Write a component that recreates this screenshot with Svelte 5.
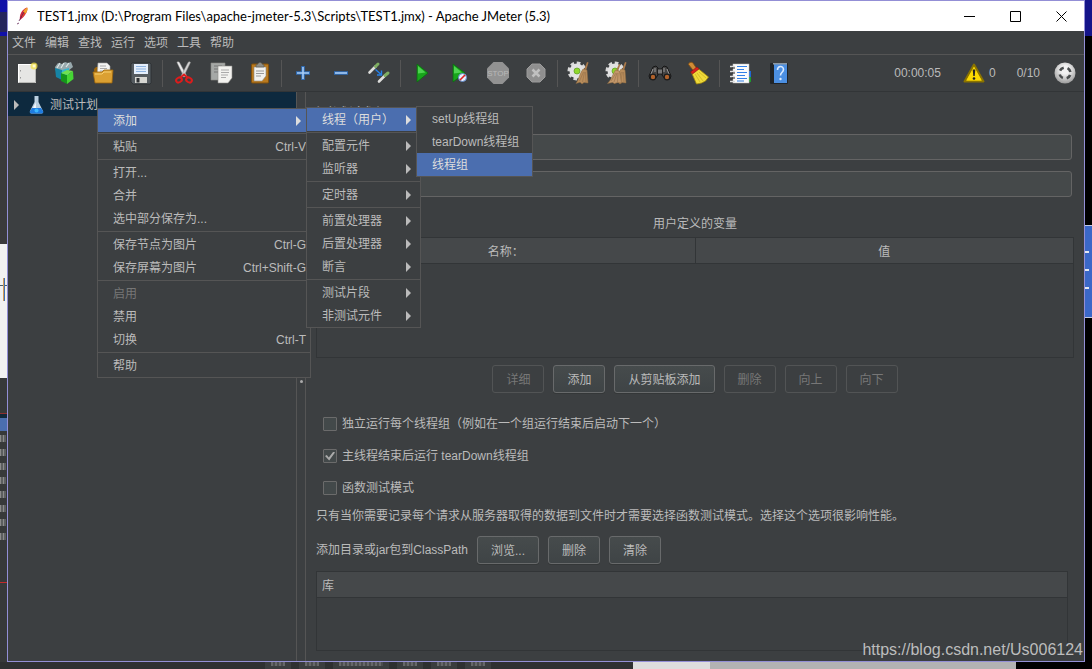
<script>
  const menus = ['文件', '编辑', '查找', '运行', '选项', '工具', '帮助']

  // toolbar art is drawn on a 24x24 grid
  const page = (x, y, w, h, fill) => `<path d="M${x} ${y}h${w}v${h - 5}l-4 5h-${w - 4}z" fill="${fill}" stroke="#8b8b86" stroke-width=".6"/>`
  const gear = `<circle cx="10" cy="10" r="8" fill="none" stroke="#d9d9d9" stroke-width="3" stroke-dasharray="3.600 2.600"/><circle cx="10" cy="10" r="7.500" fill="#e2e2e2"/><circle cx="10" cy="10" r="3" fill="#8fd82c" stroke="#5c9a1e" stroke-width=".7"/>`
  const besom = `<path d="M20 1l1.500.6-2.500 8-2-.6z" fill="#a9794a"/><path d="M16 8l4 1 1 13-4-.5-2 1.500-2-1.800-4 1.300c3-4 3-9 7-14.500z" fill="#b98d5b" stroke="#8d6a41" stroke-width=".5"/><path d="M16.500 11l-4 9M17.500 11l-2 10M18.500 11l.5 10" stroke="#96704a" stroke-width=".6"/>`
  const besomLeft = `<path d="M14 3l1.500.6-3 8-2-.8z" fill="#a9794a"/><path d="M10.500 9l4 1 2 12-4-.5-3 1-2-1-5 1c4-4 4.500-8 8-13.500z" fill="#c1966a" stroke="#8d6a41" stroke-width=".5"/><path d="M11 12l-5 8M12 12l-3 9M13 12l-.5 9" stroke="#96704a" stroke-width=".6"/>`

  const tools = [
    [
      { label: '新建', art: `<rect x="3.500" y="3.500" width="17" height="18" fill="#e6e6e4" stroke="#fff"/><path d="M3.500 21.500h17V8" fill="none" stroke="#b9b9b6"/><path d="M5.500 9v1.500M5.500 16v1.500" stroke="#999"/><circle cx="19" cy="5" r="3.500" fill="#f3e24a" opacity=".75"/><circle cx="19" cy="5" r="1.500" fill="#fffbd0"/>` },
      { label: '模板', art: `<path d="M2 6l3-4 4 1 3-2 3 1 3-1 2 5-5 4-12 0z" fill="#98a9ad"/><path d="M4 7l3-5M8 7l3-5M13 6l3-4" stroke="#dfe7e7" stroke-width="1.200"/><path d="M2 7l7 2v10l-6-3z" fill="#1684a5"/><path d="M9 9l7-2v6l-7 5z" fill="#35b5cf"/><path d="M8 12l6 2v9l-6-3z" fill="#16951c"/><path d="M14 14l6-4 .5 8-6.500 5z" fill="#45d634"/><path d="M8 12l6-3 6 1-6 4z" fill="#6fe050"/>` },
      { label: '打开', art: `<path d="M3 8l2-2h3v14H4z" fill="#9c650b"/><path d="M7 2h9l3 3v12H6z" fill="#f4f4f2" stroke="#a8a8a8" stroke-width=".6"/><path d="M9 5h6M9 7.500h7M9 10h7" stroke="#aaa"/><path d="M2 11h9l2-2h9l-1 13H4z" fill="#dba032" stroke="#9c650b" stroke-width=".8"/><path d="M4 13h7l2-2h7" stroke="#f6cf71" fill="none"/>` },
      { label: '保存', art: `<path d="M3 2h18l1 1v19l-1 1H4l-2-2V3z" fill="#555b60" stroke="#2a2d30" stroke-width=".8"/><rect x="5" y="3" width="14" height="10" fill="#e4eefb"/><path d="M7 5.500h10M7 8h10M7 10.500h10" stroke="#8db3e0"/><rect x="6" y="16" width="12" height="6" fill="#d6d6d2"/><rect x="7.500" y="17" width="3" height="4.500" fill="#2d3033"/>` }
    ],
    [
      { label: '剪切', art: `<path d="M5 1.500c0-1 2-1 2.500 0l7 13-2.500 1.500z" fill="#e9e9e9" stroke="#999" stroke-width=".5"/><path d="M18.500 1.500c0-1-2-1-2.500 0L9 15l2.500 1z" fill="#d0d0d0" stroke="#888" stroke-width=".5"/><ellipse cx="7" cy="19" rx="3" ry="2.300" fill="none" stroke="#dd1c1c" stroke-width="2" transform="rotate(-30 7 19)"/><ellipse cx="17" cy="19" rx="3" ry="2.300" fill="none" stroke="#dd1c1c" stroke-width="2" transform="rotate(30 17 19)"/><path d="M8.500 16.500l3.500-3 3.500 3" fill="none" stroke="#dd1c1c" stroke-width="2"/>` },
      { label: '复制', art: `${page(1, 2, 14, 17, '#a5a8a6')}<path d="M4 5h8M4 8h7M4 11h4" stroke="#777"/>${page(8, 5, 14, 17, '#f2f2ef')}<path d="M11 9h8M11 11.500h8M11 14h7M11 16.500h5" stroke="#aaa"/>` },
      { label: '粘贴', art: `<rect x="3.500" y="3" width="17" height="19" rx="1" fill="#b8791f" stroke="#80500c"/>${page(6, 6, 12, 14, '#f1f1ee')}<path d="M8 10h8M8 12.500h8M8 15h5" stroke="#999"/><path d="M8 6V4l2-1c0-2 4-2 4 0l2 1v2z" fill="#8c8c86" stroke="#55554f" stroke-width=".6"/>` }
    ],
    [
      { label: '展开', art: `<path d="M12 5v14M5 12h14" stroke="#2f6cb5" stroke-width="3.600"/><path d="M12 6v12M6 12h12" stroke="#a8ccf5" stroke-width="1.600"/>` },
      { label: '收起', art: `<path d="M5 12h14" stroke="#2f6cb5" stroke-width="3.600"/><path d="M6 12h12" stroke="#a8ccf5" stroke-width="1.600"/>` },
      { label: '切换', art: `<path d="M2.500 11.500l6-6" stroke="#dededc" stroke-width="2.600" stroke-linecap="round"/><path d="M8.500 5.500l2.500-2.500" stroke="#7fae62" stroke-width="3" stroke-linecap="round"/><path d="M12 20.500l6-6" stroke="#dededc" stroke-width="2.600" stroke-linecap="round"/><path d="M18 14.500l3-2.500" stroke="#7fae62" stroke-width="3" stroke-linecap="round"/><path d="M8.500 8.500l5 4.500M14.500 9.500v4.500h-4.500" fill="none" stroke="#2681e8" stroke-width="1.400"/>` }
    ],
    [
      { label: '启动', art: `<path d="M7 3l11 9L7 21z" fill="#18a51b" stroke="#0a6d10" stroke-width=".8"/><path d="M8 5l7.500 6.500-7.500 1z" fill="#4ed350"/>` },
      { label: '不停顿开始', art: `<path d="M5 3l12 9-12 9z" fill="#18a51b" stroke="#0a6d10" stroke-width=".8"/><path d="M6 5l8 6.500-8 1z" fill="#4ed350"/><circle cx="14.500" cy="16.500" r="4" fill="#e8eefc" stroke="#5c86c8" stroke-width="1"/><path d="M12 19l5-5" stroke="#e02020" stroke-width="1.600"/>` },
      { label: '停止', art: `<path d="M7.500 1h9L23 7.500v9L16.500 23h-9L1 16.500v-9z" fill="#929292"/><text x="12" y="15" text-anchor="middle" font-family="Liberation Sans, sans-serif" font-size="8" fill="#b9b9b9">STOP</text>` },
      { label: '关闭', art: `<path d="M8 3h8l5 5v8l-5 5H8l-5-5V8z" fill="#8f8f8f" stroke="#9b9b9b"/><path d="M8.500 8.500l7 7M15.500 8.500l-7 7" stroke="#c0c0c0" stroke-width="2.500"/>` }
    ],
    [
      { label: '清除', art: gear + besom },
      { label: '清除全部', art: gear + besom + besomLeft }
    ],
    [
      { label: '查找', art: `<path d="M5 6l3-1 2 2v7l-3 4H2l-1-3z" fill="#454545" stroke="#161616"/><path d="M19 6l-3-1-2 2v7l3 4h5l1-3z" fill="#454545" stroke="#161616"/><rect x="9.500" y="8" width="5" height="5" fill="#777" stroke="#161616" stroke-width=".8"/><path d="M5 8l-2 5M19 8l2 5M7 7v4M16 7v4" stroke="#999"/><circle cx="5" cy="16" r="2.800" fill="#b1622b" stroke="#1c1c1c" stroke-width="1.200"/><circle cx="19" cy="16" r="2.800" fill="#b1622b" stroke="#1c1c1c" stroke-width="1.200"/>` },
      { label: '重置查找', art: `<path d="M2.500 3.500c0-2 3-3 4.500-1.500l4 6-3 2.500z" fill="#cf8c35" stroke="#7d4d12" stroke-width=".8"/><path d="M5.500 11.500l6-4.500 11 9-3 4-4 2-5 1z" fill="#f0da3a" stroke="#a48b0a" stroke-width=".8"/><path d="M9 13l5 8M11 12l6 8M13 11l7 6" stroke="#cdb722" stroke-width=".8"/><path d="M4.500 11l6.500-5 2 2-6.500 5z" fill="#d8201e" stroke="#8a1010" stroke-width=".6"/>` }
    ],
    [
      { label: '函数助手对话框', art: `<rect x="19" y="10" width="3" height="6" fill="#2068d4"/><rect x="19" y="16" width="3" height="5" fill="#1d9c2c"/><rect x="4" y="3" width="16" height="19" fill="#fbfbfb" stroke="#bbb" stroke-width=".5"/><path d="M8 5.500h10M8 8.500h7M8 11.500h10M8 14.500h8M8 17.500h10M8 20h7" stroke="#3280e8" stroke-width="1.200"/><path d="M1 5.500h5M1 10.500h5M1 15.500h5M1 20.500h5" stroke="#ddd" stroke-width="1.600"/><path d="M3 7h3M3 12h3M3 17h3" stroke="#222"/>` },
      { label: '帮助', art: `<rect x="3" y="2" width="18" height="21" rx="1" fill="#202428"/><path d="M7 3h13v19H7z" fill="#4b8fe2"/><path d="M6 2h14v1.500H6z" fill="#8d99a5"/><path d="M10.500 9c0-4.500 6-4.500 6-.5 0 3-3 2.500-3 6" fill="none" stroke="#dcebff" stroke-width="1.600"/><circle cx="13.500" cy="18" r="1.200" fill="#dcebff"/>` }
    ]
  ]

  const threadMenu = [
    { label: 'setUp线程组' },
    { label: 'tearDown线程组' },
    { label: '线程组', active: true }
  ]

  const addMenu = [
    { label: '线程（用户）', active: true, more: true, items: threadMenu },
    null,
    { label: '配置元件', more: true },
    { label: '监听器', more: true },
    null,
    { label: '定时器', more: true },
    null,
    { label: '前置处理器', more: true },
    { label: '后置处理器', more: true },
    { label: '断言', more: true },
    null,
    { label: '测试片段', more: true },
    { label: '非测试元件', more: true }
  ]

  const contextMenu = [
    { label: '添加', active: true, more: true, items: addMenu },
    null,
    { label: '粘贴', keys: 'Ctrl-V' },
    null,
    { label: '打开...' },
    { label: '合并' },
    { label: '选中部分保存为...' },
    null,
    { label: '保存节点为图片', keys: 'Ctrl-G' },
    { label: '保存屏幕为图片', keys: 'Ctrl+Shift-G' },
    null,
    { label: '启用', disabled: true },
    { label: '禁用' },
    { label: '切换', keys: 'Ctrl-T' },
    null,
    { label: '帮助' }
  ]

  const rowActions = [
    { label: '详细', disabled: true },
    { label: '添加' },
    { label: '从剪贴板添加' },
    { label: '删除', disabled: true },
    { label: '向上', disabled: true },
    { label: '向下', disabled: true }
  ]

  let name = $state('')
  let comment = $state('')
  let options = $state([
    { label: '独立运行每个线程组（例如在一个组运行结束后启动下一个）', checked: false },
    { label: '主线程结束后运行 tearDown线程组', checked: true },
    { label: '函数测试模式', checked: false }
  ])
</script>

{#snippet menuList(items, level)}
  <ul class="menu level-{level}" role="menu">
    {#each items as item}
      {#if item}
        <li role="none">
          <button class="menu-item" class:active={item.active} role="menuitem" disabled={item.disabled}>
            <span>{item.label}</span>
            {#if item.keys}<span class="keys">{item.keys}</span>{/if}
            {#if item.more}<span class="arrow"></span>{/if}
          </button>
          {#if item.items}
            {@render menuList(item.items, level + 1)}
          {/if}
        </li>
      {:else}
        <li class="menu-line" role="separator"></li>
      {/if}
    {/each}
  </ul>
{/snippet}

<div class="desktop">
  <div class="edge edge-left" aria-hidden="true">
    <div class="sky"></div>
    <div class="dark-pane"></div>
    <div class="white-pane"><i></i></div>
    <div class="low-pane"></div>
    <div class="blue-line"></div>
    <div class="mid-pane">
      {#each Array(8) as _}
        <i></i>
      {/each}
    </div>
    <div class="red-line"></div>
  </div>

  <div class="window">
    <header class="titlebar">
      <svg class="feather" width="14" height="18" viewBox="0 0 14 18">
        <path d="M4 13C3 8 6 2 11 .500c1.500 3-2 9-7 12.500z" fill="#cf2342" />
        <path d="M7 5c1-2 2.500-4 4.500-4.500.5 2-.500 4-2 6.500z" fill="#f2a32c" />
        <path d="M5 9l2.500-4 2 1.500-3 4z" fill="#e2432c" />
        <path d="M1 17l2-1M3 14l5-9" stroke="#5f2153" stroke-width=".8" />
      </svg>
      <span class="title">TEST1.jmx (D:\Program Files\apache-jmeter-5.3\Scripts\TEST1.jmx) - Apache JMeter (5.3)</span>
      <button class="win-btn" aria-label="最小化"><svg width="11" height="11"><path d="M0 5.500h11" /></svg></button>
      <button class="win-btn" aria-label="最大化"><svg width="11" height="11"><path d="M.5.5h10v10H.5z" /></svg></button>
      <button class="win-btn" aria-label="关闭"><svg width="11" height="11"><path d="M.5.5l10 10M10.500.5l-10 10" /></svg></button>
    </header>

    <nav class="menubar">
      {#each menus as menu}
        <button>{menu}</button>
      {/each}
    </nav>

    <div class="toolbar">
      {#each tools as group, i}
        {#if i > 0}<span class="tool-line"></span>{/if}
        {#each group as tool}
          <button class="tool" aria-label={tool.label}>
            <svg width="24" height="24" viewBox="0 0 24 24">{@html tool.art}</svg>
          </button>
        {/each}
      {/each}
      <div class="status">
        <span class="clock">00:00:05</span>
        <svg width="22" height="20" viewBox="0 0 22 20">
          <path d="M11 1.500L20.500 18.500h-19z" fill="#f7d000" stroke="#8a7300" stroke-width="2" stroke-linejoin="round" />
          <path d="M11 4L18.500 17.500h-15z" fill="#fbd900" />
          <path d="M9.700 6.500h2.600l-.6 6.500h-1.400z" fill="#222" />
          <circle cx="11" cy="15.500" r="1.300" fill="#222" />
        </svg>
        <span class="errors">0</span>
        <span class="threads">0/10</span>
        <svg width="22" height="22" viewBox="0 0 22 22">
          <defs>
            <radialGradient id="knob" cx=".5" cy=".35" r=".65">
              <stop offset=".3" stop-color="#f2f2f2" />
              <stop offset="1" stop-color="#9c9c9c" />
            </radialGradient>
          </defs>
          <circle cx="11" cy="11" r="10.500" fill="url(#knob)" />
          <circle cx="11" cy="11" r="5.500" fill="none" stroke="#4a4d4e" stroke-width="2.600" stroke-dasharray="4.640 4" stroke-dashoffset="-2" />
        </svg>
      </div>
    </div>

    <main class="workspace">
      <aside class="tree">
        <button class="tree-row">
          <span class="arrow"></span>
          <svg width="15" height="19" viewBox="0 0 15 19">
            <path d="M5.500 1h4v6l4.500 9c.5 1.500 0 2.500-1.500 2.500h-10C1 18.500.5 17.500 1 16l4.500-9z" fill="#b9cfe0" />
            <path d="M3 13h9l2 3c.5 1.500 0 2.500-1.500 2.500h-10C1 18.500.5 17.500 1 16z" fill="#1f7ce0" />
            <path d="M6.500 1v7l-2.500 5h3z" fill="#f2f7fb" />
            <circle cx="7.500" cy="15.500" r="2" fill="#39b7ff" />
          </svg>
          <span>测试计划</span>
        </button>
      </aside>

      <div class="splitter"><span class="grip"></span></div>

      <section class="panel">
        <h1>测试计划</h1>
        <div class="fields">
          <input type="text" aria-label="名称" bind:value={name} />
          <input type="text" aria-label="注释" bind:value={comment} />
        </div>

        <h2>用户定义的变量</h2>
        <div class="grid variables">
          <table>
            <thead>
              <tr><th>名称：</th><th>值</th></tr>
            </thead>
          </table>
        </div>

        <div class="buttons centered">
          {#each rowActions as action}
            <button class="btn" disabled={action.disabled}>{action.label}</button>
          {/each}
        </div>

        <div class="options">
          {#each options as option}
            <label class="option">
              <input type="checkbox" bind:checked={option.checked} />
              <span>{option.label}</span>
            </label>
          {/each}
        </div>

        <p>只有当你需要记录每个请求从服务器取得的数据到文件时才需要选择函数测试模式。选择这个选项很影响性能。</p>

        <div class="buttons">
          <span class="path-label">添加目录或jar包到ClassPath</span>
          <button class="btn">浏览...</button>
          <button class="btn">删除</button>
          <button class="btn">清除</button>
        </div>

        <div class="grid library">
          <table>
            <thead>
              <tr><th>库</th></tr>
            </thead>
          </table>
        </div>
      </section>

      {@render menuList(contextMenu, 1)}
    </main>
  </div>

  <div class="edge edge-right" aria-hidden="true">
    <div class="sky"></div>
    <div class="black-pane"></div>
    <div class="blue-pane"><i></i><i></i><i></i></div>
  </div>

  <div class="edge-bottom" aria-hidden="true">
    <div class="bottom-dark">
      <i></i><i></i><i class="wide"></i><i></i><i></i><i></i>
    </div>
    <div class="bottom-light"></div>
  </div>

  <span class="watermark">https://blog.csdn.net/Us006124</span>
</div>

<style>
  :global(body) {
    background: #000;
  }
  .desktop {
    position: relative;
    display: grid;
    grid-template-columns: 7px 1fr 7px;
    grid-template-rows: 1fr 7px;
    min-height: 100vh;
    color: #bbb;
    font: 12px/18px 'Liberation Sans', 'Noto Sans CJK SC', sans-serif;
  }
  button,
  input {
    font: inherit;
    color: inherit;
    margin: 0;
  }
  button {
    padding: 0;
    border: 0;
    background: none;
  }
  svg {
    display: block;
    flex: none;
  }

  /* what shows behind the window */
  .edge {
    display: flex;
    flex-direction: column;
  }
  .edge-left {
    background: #37393a;
  }
  .sky {
    height: 36px;
    background: #14148a;
  }
  .edge-left .sky {
    background: linear-gradient(#1010a8 0 12px, #25255c 12px 32px, #1010a8 32px);
  }
  .dark-pane {
    height: 208px;
    background: #3a3a3c;
  }
  .white-pane {
    display: flex;
    height: 134px;
    padding-left: 3px;
    box-sizing: border-box;
    background: linear-gradient(#f2f2f2 0 41px, #49606e 41px 42px, #f2f2f2 42px);
  }
  .white-pane i {
    width: 1px;
    height: 23px;
    margin-top: 34px;
    border-left: 1px solid #d39a58;
    background: #3f73b8;
  }
  .low-pane {
    height: 40px;
    background: linear-gradient(#37393a 0 35px, #8e2f2f 35px 36px, #12283a 36px);
  }
  .blue-line {
    height: 13px;
    background: #4b6eaf;
  }
  .mid-pane {
    display: flex;
    flex-direction: column;
    gap: 7px;
    height: 147px;
    padding-top: 4px;
  }
  .mid-pane i {
    height: 7px;
    margin-right: 1px;
    background: repeating-linear-gradient(90deg, #8b8b8b 0 1px, #5c5e5f 1px 3px);
  }
  .red-line {
    height: 1px;
    background: #c22a2a;
  }
  .edge-right {
    background: #000;
  }
  .black-pane {
    height: 189px;
  }
  .blue-pane {
    display: flex;
    flex-direction: column;
    gap: 16px;
    height: 66px;
    padding-top: 25px;
    border: solid #c5cbe0;
    border-width: 1px 0;
    background: #3b68c8;
  }
  .blue-pane i {
    width: 4px;
    height: 2px;
    background: #e3e7f2;
  }
  .edge-bottom {
    grid-column: 1 / -1;
    display: flex;
    background: #000;
  }
  .bottom-dark {
    display: flex;
    gap: 8px;
    width: 58%;
    padding-left: 265px;
    box-sizing: border-box;
    background: #2e3031;
  }
  .bottom-dark i {
    box-sizing: border-box;
    width: 26px;
    border: solid #3a3d3e;
    border-width: 0 6px 3px;
    background: repeating-linear-gradient(90deg, #666869 0 2px, #4b4d4e 2px 4px);
  }
  .bottom-dark .wide {
    width: 56px;
  }
  .bottom-light {
    width: 35%;
    background: linear-gradient(90deg, #ddd 0 20%, #b3b3b3 20%);
  }

  .window {
    display: flex;
    flex-direction: column;
    min-width: 0;
    border: 1px solid #938fd6;
    background: #3c3f41;
  }
  .titlebar {
    display: flex;
    align-items: center;
    height: 30px;
    padding-left: 8px;
    background: #fff;
    color: #000;
    font-family: Lato, sans-serif;
    font-size: 13px;
  }
  .title {
    flex: 1;
    margin-left: 7px;
    white-space: nowrap;
    overflow: hidden;
  }
  .win-btn {
    display: grid;
    place-items: center;
    width: 46px;
    height: 30px;
  }
  .win-btn path {
    fill: none;
    stroke: #000;
  }

  .menubar {
    display: flex;
    gap: 9px;
    height: 23px;
    padding: 0 4px;
    border-bottom: 1px solid #555;
  }
  .toolbar {
    display: flex;
    align-items: center;
    height: 36px;
    border-bottom: 1px solid #323537;
  }
  .tool {
    display: grid;
    place-items: center;
    width: 38px;
    height: 36px;
  }
  .tool-line {
    width: 1px;
    height: 27px;
    margin: 0 2px;
    background: #555;
  }
  .status {
    display: flex;
    align-items: center;
    margin-left: auto;
    padding-right: 8px;
  }
  .clock {
    margin-right: 22px;
  }
  .errors {
    margin: 0 21px 0 4px;
  }
  .threads {
    margin-right: 14px;
  }

  .workspace {
    position: relative;
    display: flex;
    flex: 1;
  }
  .tree {
    width: 288px;
  }
  .tree-row {
    display: flex;
    align-items: center;
    width: 100%;
    height: 24px;
    padding: 1px 0 0 6px;
    background: #0d293e;
  }
  .tree-row svg {
    margin: 0 6px 0 10px;
  }
  .arrow {
    border: solid transparent;
    border-width: 5px 0 5px 5px;
    border-left-color: currentColor;
  }
  .splitter {
    display: grid;
    place-items: center;
    width: 8px;
    padding-top: 10px;
    border: solid #555;
    border-width: 0 1px;
  }
  .grip {
    width: 3px;
    height: 3px;
    border-radius: 50%;
    background: #aaa;
  }

  .panel {
    flex: 1;
    min-width: 0;
    padding: 11px 10px 10px;
  }
  h1 {
    margin: 0 0 7px;
    font-size: 16px;
    line-height: 24px;
    font-weight: normal;
  }
  h2 {
    margin: 18px 0 4px;
    font-size: 12px;
    line-height: 18px;
    font-weight: normal;
    text-align: center;
  }
  .fields {
    display: grid;
    gap: 11px;
    padding-right: 2px;
  }
  .fields input {
    box-sizing: border-box;
    height: 26px;
    padding: 0 6px;
    border: 1px solid #646464;
    border-radius: 3px;
    background: #45494a;
  }
  .grid {
    box-sizing: border-box;
    border: 1px solid #323537;
  }
  .variables {
    height: 121px;
  }
  .library {
    height: 80px;
    margin: 7px 6px 0 0;
  }
  table {
    width: 100%;
    table-layout: fixed;
    border-collapse: collapse;
  }
  th {
    height: 23px;
    padding: 2px 5px 0;
    border-bottom: 1px solid #323537;
    background: #45484a;
    font-weight: normal;
  }
  th + th {
    border-left: 1px solid #323537;
  }
  .library th {
    text-align: left;
  }

  .buttons {
    display: flex;
    align-items: center;
    gap: 9px;
  }
  .centered {
    justify-content: center;
    margin-top: 7px;
  }
  .btn {
    height: 28px;
    padding: 1px 13px 0;
    border: 1px solid #686a6b;
    border-radius: 3px;
    background: linear-gradient(#464b4c, #3f4446);
    box-shadow: 0 1px #343738;
    white-space: nowrap;
  }
  .btn:disabled {
    border-color: #525455;
    background: none;
    box-shadow: none;
    color: #777;
  }
  .options {
    display: flex;
    flex-direction: column;
    align-items: flex-start;
    gap: 8px;
    margin-top: 19px;
    padding-left: 7px;
  }
  .option {
    display: flex;
    align-items: center;
    gap: 5px;
    height: 24px;
  }
  .option input {
    appearance: none;
    display: grid;
    place-items: center;
    box-sizing: border-box;
    width: 14px;
    height: 14px;
    border: 1px solid #6b6b6b;
    border-radius: 1px;
    background: #43494a;
  }
  .option input:checked::before {
    content: '';
    width: 10px;
    height: 9px;
    background: #aaa;
    clip-path: polygon(0 50%, 18% 38%, 38% 66%, 84% 0, 100% 12%, 42% 100%);
  }
  p {
    margin: 7px 0 11px;
  }

  .menu {
    position: absolute;
    margin: 0;
    padding: 0;
    border: 1px solid #555;
    background: #3c3f41;
    list-style: none;
    white-space: nowrap;
  }
  .menu li {
    position: relative;
  }
  .menu.level-1 {
    top: 16px;
    left: 89px;
    width: 212px;
  }
  .menu.level-2,
  .menu.level-3 {
    top: -2px;
    left: calc(100% - 4px);
    z-index: 1;
  }
  .menu.level-2 {
    width: 113px;
  }
  .menu.level-3 {
    width: 115px;
  }
  .menu-item {
    display: flex;
    align-items: center;
    justify-content: space-between;
    width: 100%;
    height: 23px;
    padding: 0 9px 0 15px;
  }
  .menu-item:disabled {
    color: #777;
  }
  .menu-item.active {
    background: #4b6eaf;
    color: #ddd;
  }
  .keys {
    margin-right: -5px;
  }
  .menu-line {
    height: 1px;
    margin: 1px 0;
    background: #555;
  }

  .watermark {
    position: absolute;
    right: 9px;
    bottom: 9px;
    color: #bdbdbd;
    font-size: 16px;
    line-height: 20px;
  }
</style>
